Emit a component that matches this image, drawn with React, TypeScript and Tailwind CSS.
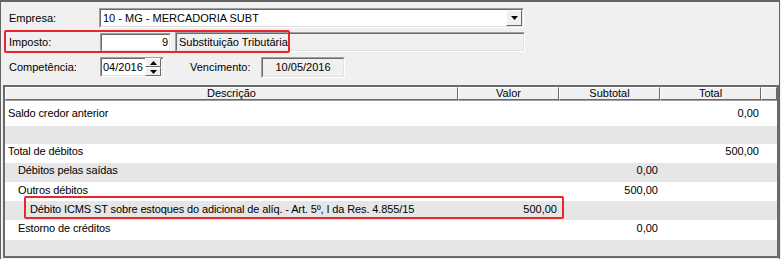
const sunkenOuter = "border-t border-l border-t-[#a0a0a0] border-l-[#a0a0a0] border-b border-r border-b-white border-r-white";
const sunkenInner = "border-t border-l border-t-[#696969] border-l-[#696969] border-b border-r border-b-[#e3e3e3] border-r-[#e3e3e3]";
const raised = "border-t border-l border-t-white border-l-white border-b border-r border-b-[#696969] border-r-[#696969] bg-[#f0f0f0]";

function Arrow({ up }: { up?: boolean }) {
  return (
    <svg width="7" height="4" viewBox="0 0 7 4">
      <polygon points={up ? "3.5,0 7,4 0,4" : "0,0 7,0 3.5,4"} fill="#000" />
    </svg>
  );
}

type Row = { desc: string; indent: number; valor?: string; subtotal?: string; total?: string; h: number; gray: boolean; mark?: boolean; lift: number };

const rows: Row[] = [
  { desc: "Saldo credor anterior", indent: 3, total: "0,00", h: 25, gray: false, lift: 0 },
  { desc: "", indent: 3, h: 18, gray: true, lift: 0 },
  { desc: "Total de débitos", indent: 3, total: "500,00", h: 19, gray: false, lift: 4 },
  { desc: "Débitos pelas saídas", indent: 13, subtotal: "0,00", h: 19, gray: true, lift: 4 },
  { desc: "Outros débitos", indent: 13, subtotal: "500,00", h: 19, gray: false, lift: 3 },
  { desc: "Débito ICMS ST sobre estoques do adicional de alíq. - Art. 5º, I da Res. 4.855/15", indent: 25, valor: "500,00", h: 19, gray: true, mark: true, lift: 3 },
  { desc: "Estorno de créditos", indent: 13, subtotal: "0,00", h: 20, gray: false, lift: 3 },
  { desc: "", indent: 3, h: 20, gray: true, lift: 0 },
];

export default function App() {
  return (
    <div className="w-[781px] h-[259px] overflow-hidden bg-[#f0f0f0] font-['Liberation_Sans',Arial,sans-serif] text-[11px] text-black leading-none">
      <div className="w-[780px] h-[262px] border-t-2 border-l border-r border-[#646464] pt-[6px]">
        {/* Empresa */}
        <div className="flex items-center h-[20px]">
          <div className="w-[98px] pl-[8px]">Empresa:</div>
          <div className={`w-[425px] h-[20px] ${sunkenOuter}`}>
            <div className={`h-full flex items-center bg-white ${sunkenInner}`}>
              <span className="flex-1 pl-[2px]">10 - MG - MERCADORIA SUBT</span>
              <div className={`w-[16px] h-[16px] flex items-center justify-center ${raised}`}>
                <Arrow />
              </div>
            </div>
          </div>
        </div>

        {/* Imposto */}
        <div className="relative flex items-center h-[20px] mt-[4px]">
          <div className="w-[99px] pl-[8px]">Imposto:</div>
          <div className={`w-[71px] h-[19px] ${sunkenOuter}`}>
            <div className={`h-full bg-white flex items-center justify-end pr-[1px] ${sunkenInner}`}>9</div>
          </div>
          <div className={`ml-[4px] w-[350px] h-[20px] ${sunkenOuter}`}>
            <div className={`h-full flex items-center pl-[2px] ${sunkenInner}`}>Substituição Tributária</div>
          </div>
          <div className="absolute left-[3px] top-[-2px] w-[286px] h-[23px] border-2 border-[#e8262b] rounded-[2px]" />
        </div>

        {/* Competência */}
        <div className="flex items-center h-[20px] mt-[5px]">
          <div className="w-[99px] pl-[8px]">Competência:</div>
          <div className={`w-[64px] h-[20px] ${sunkenOuter}`}>
            <div className={`h-full bg-white flex items-center ${sunkenInner}`}>
              <span className="flex-1 pl-[1px]">04/2016</span>
              <div className="flex flex-col w-[16px] h-[18px] mr-[1px]">
                <div className={`h-[9px] flex items-center justify-center ${raised}`}><Arrow up /></div>
                <div className={`h-[9px] flex items-center justify-center ${raised}`}><Arrow /></div>
              </div>
            </div>
          </div>
          <div className="ml-[26px] w-[71px]">Vencimento:</div>
          <div className={`w-[84px] h-[21px] ${sunkenOuter}`}>
            <div className={`h-full flex items-center justify-center ${sunkenInner}`}>10/05/2016</div>
          </div>
        </div>

        {/* Grid */}
        <div className="ml-[2px] mt-[8px] w-[776px] h-[173px] border-2 border-[#6b6b6b] bg-white overflow-hidden">
          <div className="flex h-[14px] bg-[#f0f0f0] border-b border-[#a0a0a0]">
            <div className={`w-[453px] flex items-center justify-center ${raised}`}>Descrição</div>
            <div className={`w-[101px] flex items-center justify-center ${raised}`}>Valor</div>
            <div className={`w-[101px] flex items-center justify-center ${raised}`}>Subtotal</div>
            <div className={`w-[101px] flex items-center justify-center ${raised}`}>Total</div>
            <div className={`flex-1 ${raised}`} />
          </div>
          {rows.map((r, i) => (
            <div key={i} className={`relative flex items-center ${r.gray ? "bg-[#e6e6e6]" : "bg-white"}`} style={{ height: r.h, paddingBottom: r.lift }}>
              <div className="w-[453px] whitespace-nowrap tracking-[-0.12px]" style={{ paddingLeft: r.indent }}>{r.desc}</div>
              <div className="w-[101px] text-right pr-[2px]">{r.valor}</div>
              <div className="w-[101px] text-right pr-[2px]">{r.subtotal}</div>
              <div className="w-[101px] text-right pr-[2px]">{r.total}</div>
              {r.mark && (
                <div className="absolute left-[19px] top-[-5px] w-[540px] h-[23px] border-2 border-[#e8262b] rounded-[2px]" />
              )}
            </div>
          ))}
        </div>
      </div>
    </div>
  );
}
